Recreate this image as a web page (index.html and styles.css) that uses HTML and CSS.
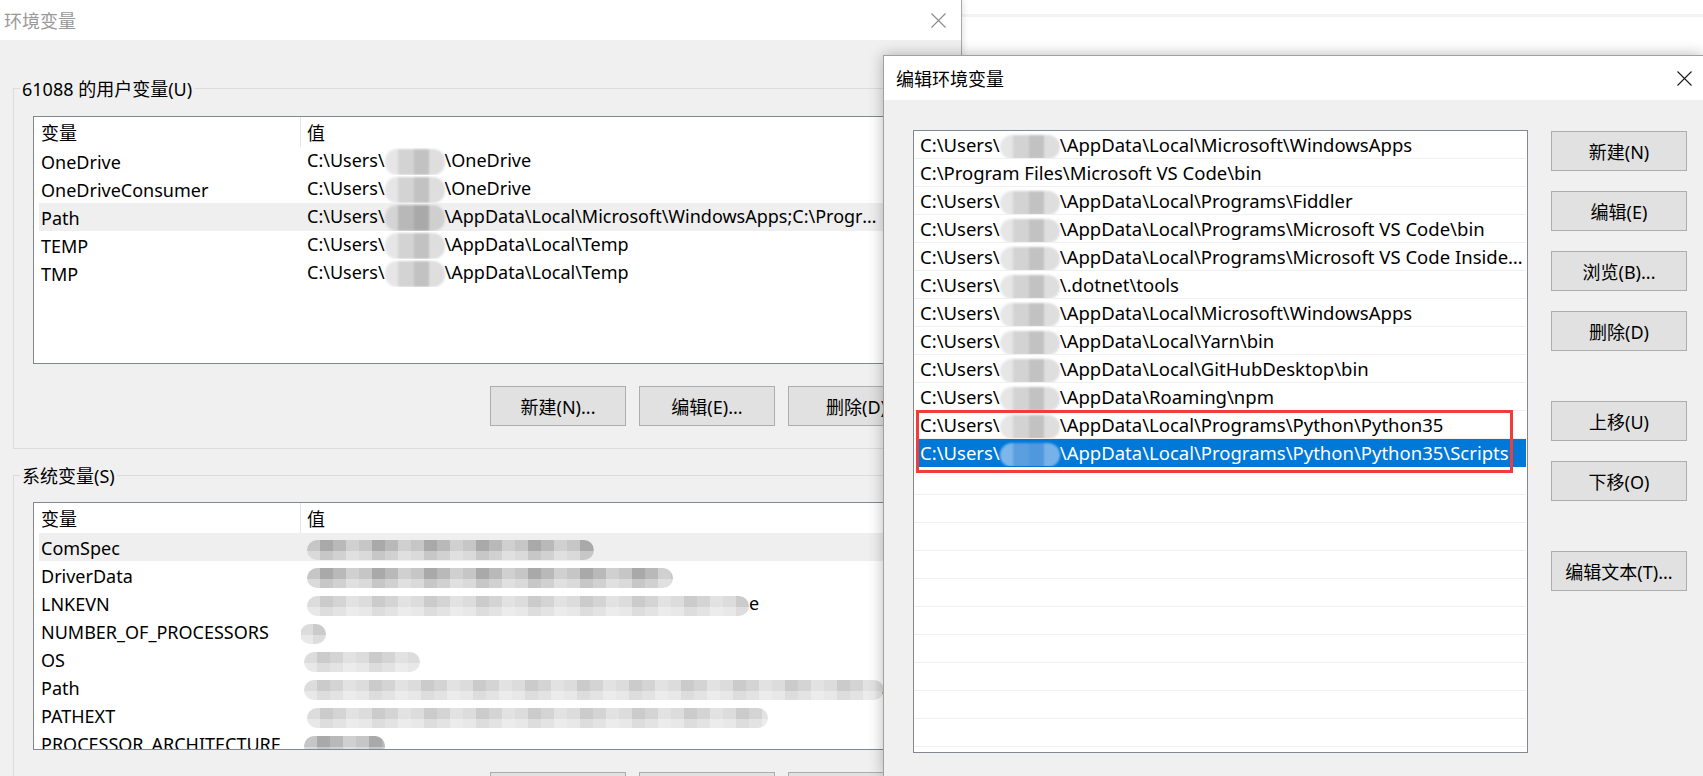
FILE: index.html
```html
<!DOCTYPE html>
<html lang="zh-CN">
<head>
  <meta charset="UTF-8">
  <title>环境变量</title>
  <link rel="stylesheet" href="styles.css">
</head>
<body>

<div class="desktop">

  <!-- 环境变量 (inactive, behind) -->
  <div class="window env">
    <div class="titlebar">
      <span class="title">环境变量</span>
      <span class="close">
        <svg width="15" height="15" viewBox="0 0 15 15"><path d="M0.5 0.5L14.5 14.5M14.5 0.5L0.5 14.5" stroke="#8a8a8a" stroke-width="1.1" fill="none"/></svg>
      </span>
    </div>

    <div class="env-body">
      <div class="group">
        <div class="group-title">61088 的用户变量(U)</div>
        <div class="listview">
          <div class="lv-head">
            <div class="col-name">变量</div>
            <div class="col-value">值</div>
          </div>
          <div class="lv-row">
            <div class="col-name">OneDrive</div>
            <div class="col-value">C:\Users\<span class="blur"></span>\OneDrive</div>
          </div>
          <div class="lv-row">
            <div class="col-name">OneDriveConsumer</div>
            <div class="col-value">C:\Users\<span class="blur"></span>\OneDrive</div>
          </div>
          <div class="lv-row hot">
            <div class="col-name">Path</div>
            <div class="col-value">C:\Users\<span class="blur dark"></span>\AppData\Local\Microsoft\WindowsApps;C:\Program Files\Microsoft VS Code\bin</div>
          </div>
          <div class="lv-row">
            <div class="col-name">TEMP</div>
            <div class="col-value">C:\Users\<span class="blur"></span>\AppData\Local\Temp</div>
          </div>
          <div class="lv-row">
            <div class="col-name">TMP</div>
            <div class="col-value">C:\Users\<span class="blur"></span>\AppData\Local\Temp</div>
          </div>
        </div>
        <div class="btn-row">
          <button class="btn">新建(N)...</button>
          <button class="btn">编辑(E)...</button>
          <button class="btn">删除(D)</button>
        </div>
      </div>

      <div class="group sys">
        <div class="group-title">系统变量(S)</div>
        <div class="listview">
          <div class="lv-head">
            <div class="col-name">变量</div>
            <div class="col-value">值</div>
          </div>
          <div class="lv-row hot">
            <div class="col-name">ComSpec</div>
            <div class="col-value"><span class="smear s-comspec"></span></div>
          </div>
          <div class="lv-row">
            <div class="col-name">DriverData</div>
            <div class="col-value"><span class="smear s-driver"></span></div>
          </div>
          <div class="lv-row">
            <div class="col-name">LNKEVN</div>
            <div class="col-value"><span class="smear light s-lnkevn"></span>e</div>
          </div>
          <div class="lv-row">
            <div class="col-name">NUMBER_OF_PROCESSORS</div>
            <div class="col-value"><span class="smear light s-num"></span></div>
          </div>
          <div class="lv-row">
            <div class="col-name">OS</div>
            <div class="col-value"><span class="smear light s-os"></span></div>
          </div>
          <div class="lv-row">
            <div class="col-name">Path</div>
            <div class="col-value"><span class="smear light s-path"></span></div>
          </div>
          <div class="lv-row">
            <div class="col-name">PATHEXT</div>
            <div class="col-value"><span class="smear light s-pathext"></span></div>
          </div>
          <div class="lv-row">
            <div class="col-name">PROCESSOR_ARCHITECTURE</div>
            <div class="col-value"><span class="smear s-arch"></span></div>
          </div>
        </div>
        <div class="btn-row">
          <button class="btn">新建(W)...</button>
          <button class="btn">编辑(I)...</button>
          <button class="btn">删除(L)</button>
        </div>
      </div>
    </div>
  </div>

  <!-- 编辑环境变量 (active, on top) -->
  <div class="window edit">
    <div class="titlebar">
      <span class="title">编辑环境变量</span>
      <span class="close">
        <svg width="15" height="15" viewBox="0 0 15 15"><path d="M0.5 0.5L14.5 14.5M14.5 0.5L0.5 14.5" stroke="#1a1a1a" stroke-width="1.1" fill="none"/></svg>
      </span>
    </div>

    <div class="edit-body">
      <div class="path-list">
        <div class="path-row">C:\Users\<span class="blur"></span>\AppData\Local\Microsoft\WindowsApps</div>
        <div class="path-row">C:\Program Files\Microsoft VS Code\bin</div>
        <div class="path-row">C:\Users\<span class="blur"></span>\AppData\Local\Programs\Fiddler</div>
        <div class="path-row">C:\Users\<span class="blur"></span>\AppData\Local\Programs\Microsoft VS Code\bin</div>
        <div class="path-row">C:\Users\<span class="blur"></span>\AppData\Local\Programs\Microsoft VS Code Insiders\bin</div>
        <div class="path-row">C:\Users\<span class="blur"></span>\.dotnet\tools</div>
        <div class="path-row">C:\Users\<span class="blur"></span>\AppData\Local\Microsoft\WindowsApps</div>
        <div class="path-row">C:\Users\<span class="blur"></span>\AppData\Local\Yarn\bin</div>
        <div class="path-row">C:\Users\<span class="blur"></span>\AppData\Local\GitHubDesktop\bin</div>
        <div class="path-row">C:\Users\<span class="blur"></span>\AppData\Roaming\npm</div>
        <div class="path-row">C:\Users\<span class="blur"></span>\AppData\Local\Programs\Python\Python35</div>
        <div class="path-row selected">C:\Users\<span class="blur blue"></span>\AppData\Local\Programs\Python\Python35\Scripts</div>
        <div class="path-row"></div>
        <div class="path-row"></div>
        <div class="path-row"></div>
        <div class="path-row"></div>
        <div class="path-row"></div>
        <div class="path-row"></div>
        <div class="path-row"></div>
        <div class="path-row"></div>
        <div class="path-row"></div>
        <div class="path-row"></div>

        <!-- 标注框 -->
        <div class="mark"></div>
      </div>

      <div class="side">
        <button class="btn">新建(N)</button>
        <button class="btn">编辑(E)</button>
        <button class="btn">浏览(B)...</button>
        <button class="btn">删除(D)</button>
        <button class="btn gap">上移(U)</button>
        <button class="btn">下移(O)</button>
        <button class="btn gap">编辑文本(T)...</button>
      </div>
    </div>
  </div>

</div>

</body>
</html>
```

FILE: styles.css
```css
* {
  box-sizing: border-box;
}

body {
  margin: 0;
  font-family: "Noto Sans", "Noto Sans CJK SC", sans-serif;
  font-size: 18px;
  color: #000;
  background: #fff;
}

.desktop {
  position: relative;
  width: 1703px;
  height: 776px;
  overflow: hidden;
  background: linear-gradient(to bottom, #fff 14px, #f3f3f3 14px, #f3f3f3 17px, #fff 17px);
}

/* ---------- windows ---------- */

.titlebar {
  display: flex;
  align-items: center;
  justify-content: space-between;
  background: #fff;
}

.close {
  display: flex;
  align-items: center;
  justify-content: center;
  height: 100%;
}

.env {
  width: 962px;
  height: 776px;
  background: #f0f0f0;
  border-right: 1px solid #a9a9a9;
  box-shadow: 1px 0 6px rgba(0, 0, 0, 0.12);
}

.env .titlebar {
  height: 40px;
}

.env .title {
  padding-left: 4px;
  color: #999;
}

.env .close {
  width: 46px;
}

.env-body {
  padding: 48px 0 0 13px;
}

.group {
  width: 936px;
  border: 1px solid #dcdcdc;
  border-right: none;
}

.group.sys {
  margin-top: 26px;
}

.group-title {
  width: max-content;
  margin: -12px 0 0 6px;
  padding: 0 2px;
  line-height: 24px;
  background: #f0f0f0;
}

.listview {
  width: 857px;
  height: 248px;
  margin: 15px 0 0 19px;
  background: #fff;
  border: 1px solid #828790;
  overflow: hidden;
}

.sys .listview {
  margin-top: 14px;
}

.lv-head {
  display: flex;
  height: 30px;
  align-items: stretch;
}

.lv-head .col-name {
  width: 267px;
  padding-left: 7px;
  border-right: 1px solid #e5e5e5;
  display: flex;
  align-items: center;
}

.lv-head .col-value {
  padding-left: 6px;
  display: flex;
  align-items: center;
}

.lv-row {
  display: flex;
  align-items: center;
  height: 28px;
  padding-top: 1px;
  margin-left: 5px;
  white-space: nowrap;
}

.lv-row.hot {
  background: #efefef;
}

.lv-row .col-name {
  width: 262px;
  padding-left: 2px;
  flex-shrink: 0;
}

.lv-row .col-value {
  flex: 1;
  min-width: 0;
  padding: 0 6px;
  overflow: hidden;
  text-overflow: ellipsis;
}

.btn-row {
  display: flex;
  gap: 13px;
  margin: 22px 0 0 476px;
  padding-bottom: 22px;
}

.sys .btn-row {
  margin-top: 22px;
}

.btn {
  width: 136px;
  height: 40px;
  padding: 0;
  flex-shrink: 0;
  font: inherit;
  color: #000;
  background: #e1e1e1;
  border: 1px solid #adadad;
  border-radius: 0;
}

/* ---------- blurred user names ---------- */

.blur {
  display: inline-block;
  width: 60px;
  height: 26px;
  vertical-align: middle;
  border-radius: 12px;
  background: linear-gradient(90deg, #e6e6e6 0 22%, #d3d3d3 22% 48%, #c2c2c2 48% 74%, #dedede 74%);
  filter: blur(1px);
}

.blur.dark {
  background: linear-gradient(90deg, #d4d4d4 0 22%, #b8b8b8 22% 48%, #a9a9a9 48% 74%, #cfcfcf 74%);
}

.blur.blue {
  background: linear-gradient(90deg, #7db6ea 0 22%, #5c9fe0 22% 48%, #4f98de 48% 74%, #76b2e8 74%);
}

.smear {
  display: inline-block;
  height: 20px;
  vertical-align: middle;
  border-radius: 10px;
  background:
    linear-gradient(to bottom, rgba(255, 255, 255, 0) 55%, rgba(255, 255, 255, 0.35) 55%),
    repeating-linear-gradient(90deg, #c6c6c6 0 13px, #a9a9a9 13px 26px, #b9b9b9 26px 39px, #d0d0d0 39px 52px);
  filter: blur(0.6px);
}

.smear.light {
  opacity: 0.6;
}

.s-comspec { width: 287px; }
.s-driver { width: 366px; }
.s-lnkevn { width: 442px; }
.s-num { width: 26px; margin-left: -7px; }
.s-os { width: 116px; margin-left: -3px; }
.s-path { width: 580px; margin-left: -3px; }
.s-pathext { width: 461px; }
.s-arch { width: 81px; margin-left: -3px; }

/* ---------- 编辑环境变量 ---------- */

.edit {
  position: absolute;
  left: 883px;
  top: 55px;
  width: 820px;
  height: 721px;
  background: #f0f0f0;
  border-left: 1px solid #a0a0a0;
  border-top: 1px solid #a0a0a0;
  box-shadow: 0 0 14px rgba(0, 0, 0, 0.28);
}

.edit .titlebar {
  height: 44px;
}

.edit .title {
  padding-left: 12px;
}

.edit .close {
  width: 38px;
}

.edit-body {
  display: flex;
  gap: 23px;
  padding: 30px 16px 0 29px;
}

.path-list {
  position: relative;
  width: 615px;
  height: 623px;
  padding-right: 1px;
  background: #fff;
  border: 1px solid #828790;
  overflow: hidden;
}

.path-row {
  height: 28px;
  line-height: 28px;
  padding: 0 2px 0 6px;
  font-size: 18.5px;
  border-bottom: 1px solid #f0f0f0;
  white-space: nowrap;
  overflow: hidden;
  text-overflow: ellipsis;
}

.path-row .blur {
  width: 60px;
  height: 24px;
}

.path-row.selected {
  margin-left: 2px;
  padding-left: 4px;
  background: #0078d7;
  border-bottom-color: #0078d7;
  color: #fff;
}

.mark {
  position: absolute;
  left: 2px;
  top: 279px;
  width: 597px;
  height: 63px;
  border: 3px solid #f23b3b;
}

.side {
  display: flex;
  flex-direction: column;
  gap: 20px;
  padding-top: 1px;
}

.side .gap {
  margin-top: 30px;
}
```
